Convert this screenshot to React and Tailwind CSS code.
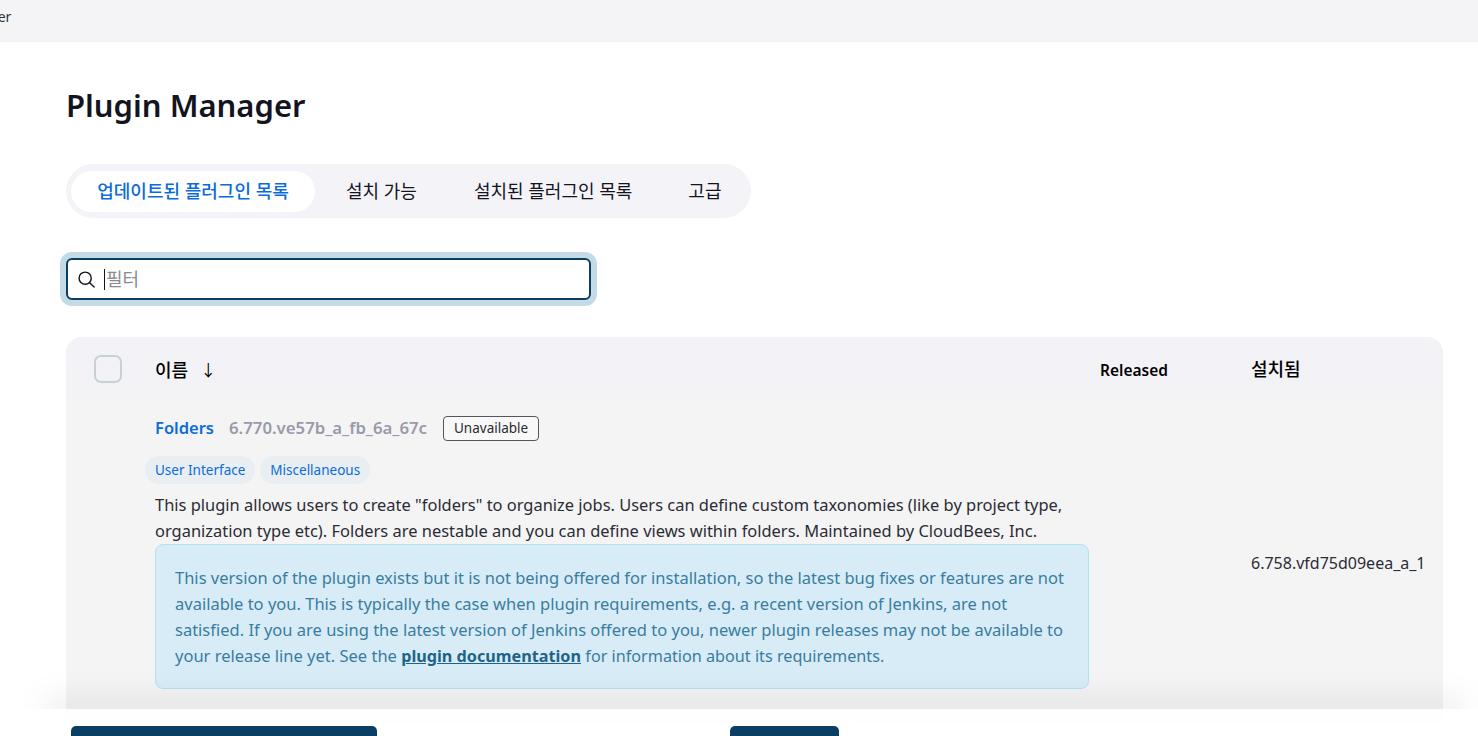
import React from 'react';

const tabs = ['업데이트된 플러그인 목록', '설치 가능', '설치된 플러그인 목록', '고급'];
const fontStack = "font-['Noto_Sans','Noto_Sans_CJK_KR',sans-serif]";

const SearchIcon = () => (
    <svg viewBox="0 0 20 20" fill="none" stroke="#14141f" strokeWidth="1.5" strokeLinecap="round" className="w-[19px] h-[19px] shrink-0 -ml-px">
        <circle cx="8.6" cy="8.6" r="6.4" />
        <path d="M13.3 13.3L18 18" />
    </svg>
);

const App = () => {
    return (
        <div className={`relative h-[736px] overflow-hidden bg-white text-[#14141f] ${fontStack}`}>
            <div className="h-[42px] bg-[#f4f4f7] text-sm leading-[34px] -ml-[48px] text-[#333]">
                <span>Manager</span>
            </div>

            <div className="pl-[66px] pr-[35px]">
                <h1 className="mt-[40px] h-[46px] text-[31px] leading-[46px] font-semibold">Plugin Manager</h1>

                <div className="mt-[36px] w-[685px] h-[54px] rounded-[27px] bg-[#f3f3f8] flex items-center pl-[5px] text-[18px]">
                    <div className="w-[244px] h-[41px] rounded-[21px] bg-white text-[#0b6bd8] font-medium flex items-center justify-center">{tabs[0]}</div>
                    <div className="ml-[31px]">{tabs[1]}</div>
                    <div className="ml-[57px]">{tabs[2]}</div>
                    <div className="ml-[56px]">{tabs[3]}</div>
                </div>

                <div className="mt-[40px] w-[525px] h-[42px] rounded-[6px] bg-white border-2 border-[#0a3f63] shadow-[0_0_0_6px_#c4dbe7] flex items-center pl-[10px] gap-[7px]">
                    <SearchIcon />
                    <div className="w-px h-[21px] ml-px bg-[#14141f]"></div>
                    <span className="text-[18px] text-[#8a8a8f] -ml-[7px] pl-[1px] leading-none">필터</span>
                </div>

                <div className="mt-[37px] rounded-t-[16px] bg-[#f4f4f5] overflow-hidden">
                    <div className="h-[65px] bg-linear-to-b from-[#f2f2f7] to-[#f3f3f6] flex items-start pt-[19px] text-[18px] font-medium text-black">
                        <div className="w-[89px] pl-[28px] -mt-px">
                            <div className="w-[28px] h-[28px] rounded-[7px] border-2 border-[#c6d0d6]"></div>
                        </div>
                        <div className="w-[945px] flex items-center h-[28px]">
                            <span>이름</span>
                            <span className="ml-[12px] font-normal text-[16px]">↓</span>
                        </div>
                        <div className="w-[151px] h-[28px] pt-px flex items-center text-[15.5px] font-semibold">Released</div>
                        <div className="h-[28px] -mt-px flex items-center">설치됨</div>
                    </div>

                    <div className="flex h-[330px]">
                        <div className="w-[89px]"></div>
                        <div className="w-[945px] pr-[11px]">
                            <div className="flex items-center h-[28px] mt-[12px]">
                                <span className="text-[#0b6bd8] text-[16.5px] font-semibold">Folders</span>
                                <span className="ml-[15px] text-[16.75px] font-semibold text-[#9a9aab]">6.770.ve57b_a_fb_6a_67c</span>
                                <span className="ml-[16px] h-[25px] px-[10px] rounded-[4px] border border-[#55555c] bg-white/40 text-[13.5px] flex items-center text-[#2a2a30]">Unavailable</span>
                            </div>
                            <div className="mt-[14px] -ml-[10px] flex gap-[5px] text-[13.5px] text-[#0b6bd8]">
                                <span className="h-[28px] px-[10px] rounded-[14px] bg-[#e9eef3] flex items-center">User Interface</span>
                                <span className="h-[28px] px-[10px] rounded-[14px] bg-[#e9eef3] flex items-center">Miscellaneous</span>
                            </div>
                            <p className="mt-[8px] text-[16.45px] leading-[26px] text-[#2c2c34]">
                                This plugin allows users to create "folders" to organize jobs. Users can define custom taxonomies (like by project type,<br />
                                organization type etc). Folders are nestable and you can define views within folders. Maintained by CloudBees, Inc.
                            </p>
                            <div className="h-[145px] rounded-[8px] border border-[#b0e4f1] bg-[#d7ecf6] px-[19px] pt-[20px] text-[16.5px] leading-[26px] text-[#3a7d9f] whitespace-nowrap">
                                This version of the plugin exists but it is not being offered for installation, so the latest bug fixes or features are not<br />
                                available to you. This is typically the case when plugin requirements, e.g. a recent version of Jenkins, are not<br />
                                satisfied. If you are using the latest version of Jenkins offered to you, newer plugin releases may not be available to<br />
                                your release line yet. See the <a className="font-bold underline text-[#1f6488] text-[16.2px]">plugin documentation</a> <span className="text-[16.2px]">for information about its requirements.</span>
                            </div>
                        </div>
                        <div className="w-[151px]"></div>
                        <div className="pt-[148px] text-[16px] leading-[26px] text-[#2c2c34]">6.758.vfd75d09eea_a_1</div>
                    </div>
                </div>
            </div>

            <div className="absolute left-[45px] right-[15px] top-[697px] h-[22px] bg-black/[0.07] blur-[14px]"></div>
            <div className="absolute left-0 right-0 bottom-0 h-[27px] bg-white/95">
                <div className="absolute left-[71px] top-[17px] w-[306px] h-[20px] rounded-t-[5px] bg-[#0a3f63]"></div>
                <div className="absolute left-[730px] top-[17px] w-[109px] h-[20px] rounded-t-[5px] bg-[#0a3f63]"></div>
            </div>
        </div>
    );
};

export default App;
